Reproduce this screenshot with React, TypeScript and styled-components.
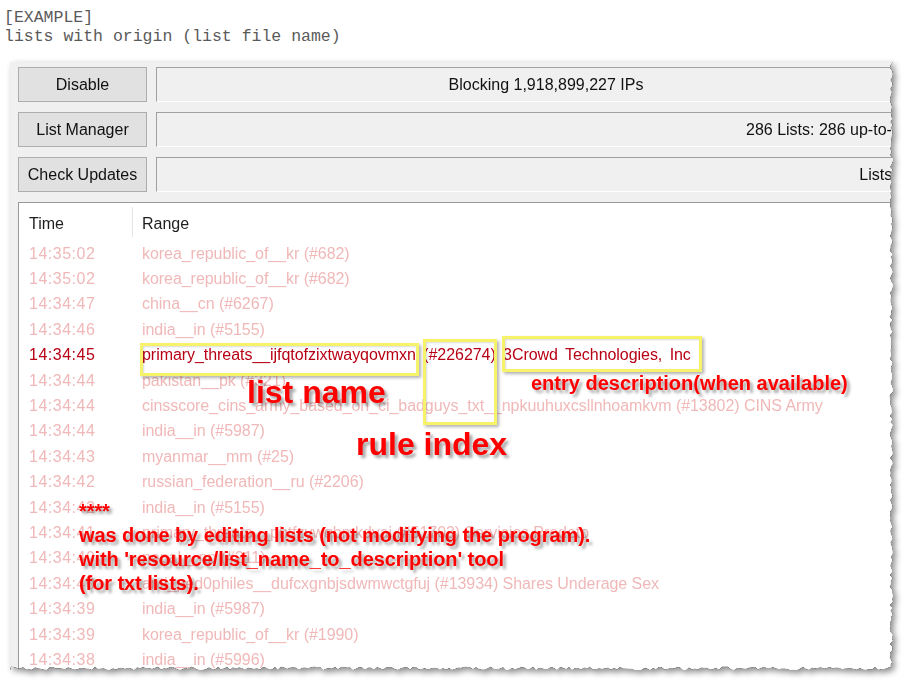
import React from 'react'
import styled, { createGlobalStyle } from 'styled-components'

const GlobalStyle = createGlobalStyle`
  body {
    margin: 0;
    background: #ffffff;
    font-family: "Liberation Sans", Arial, sans-serif;
  }
`

const Page = styled.div`
  width: 910px;
  height: 690px;
  overflow: hidden;
`

const Caption = styled.pre`
  margin: 0;
  padding: 8px 0 0 4px;
  height: 46px;
  box-sizing: border-box;
  font-family: "Liberation Mono", "Courier New", monospace;
  font-size: 16.5px;
  line-height: 19px;
  color: #5a5a5a;
`

const Paper = styled.div`
  position: relative;
  margin: 16px 0 0 10px;
  width: 883px;
  height: 608px;
  filter: drop-shadow(0 0 0.6px #2c2c2c) drop-shadow(0 0 0.4px #2c2c2c)
    drop-shadow(3px 3px 3px rgba(0, 0, 0, 0.45));
`

const Sheet = styled.div<{ $clip: string }>`
  width: 100%;
  height: 100%;
  overflow: hidden;
  background: #f0f0f0;
  clip-path: ${p => p.$clip};
`

const Window = styled.div`
  width: 940px;
  padding: 5px 0 0 8px;
  display: flex;
  flex-direction: column;
  gap: 10px;
`

const ControlRow = styled.div`
  display: grid;
  grid-template-columns: 129px 1fr;
  gap: 9px;
  height: 35px;
`

const Button = styled.div`
  box-sizing: border-box;
  display: flex;
  align-items: center;
  justify-content: center;
  padding-top: 1px;
  background: #e1e1e1;
  border: 1px solid #adadad;
  font-size: 16px;
  color: #111111;
`

const StatusField = styled.div<{ $align: 'center' | 'right'; $pad: number }>`
  box-sizing: border-box;
  display: flex;
  align-items: center;
  justify-content: ${p => (p.$align === 'center' ? 'center' : 'flex-end')};
  padding: 1px ${p => p.$pad}px 0 0;
  background: #f0f0f0;
  border-top: 1px solid #a0a0a0;
  border-left: 1px solid #a0a0a0;
  border-bottom: 1px solid #ffffff;
  border-right: 1px solid #ffffff;
  font-size: 16px;
  color: #111111;
  white-space: nowrap;
`

const ListView = styled.div`
  box-sizing: border-box;
  height: 520px;
  background: #ffffff;
  border: 1px solid #9a9a9a;
`

const HeaderRow = styled.div`
  display: grid;
  grid-template-columns: 114px 1fr;
  height: 38px;
  align-items: center;
  font-size: 16px;
  color: #1e1e1e;
`

const HeaderCell = styled.div<{ $first?: boolean }>`
  display: flex;
  align-items: center;
  height: 30px;
  padding: 3px 0 0 ${p => (p.$first ? '10px' : '9px')};
  box-sizing: border-box;
  border-right: ${p => (p.$first ? '1px solid #e5e5e5' : 'none')};
`

const Row = styled.div<{ $hot: boolean }>`
  display: grid;
  grid-template-columns: 114px 1fr;
  height: 25.4px;
  align-items: center;
  font-size: 16px;
  white-space: nowrap;
  word-spacing: ${p => (p.$hot ? '3px' : '0')};
  color: ${p => (p.$hot ? '#b80014' : '#f0b8b8')};
`

const TimeCell = styled.div`
  padding-left: 10px;
  letter-spacing: 0.5px;
`

const RangeCell = styled.div`
  padding-left: 9px;
  letter-spacing: -0.05px;
`

const Overlay = styled.div`
  position: absolute;
  inset: 0;
  pointer-events: none;
`

const Marker = styled.div`
  position: absolute;
  box-sizing: border-box;
  border: 3px solid #f6f36a;
  box-shadow: 2px 2px 3px rgba(0, 0, 0, 0.3), inset 1px 1px 2px rgba(0, 0, 0, 0.15);
`

const Label = styled.div<{ $size: number }>`
  position: absolute;
  font-family: "Liberation Sans", Arial, sans-serif;
  font-weight: bold;
  font-size: ${p => p.$size}px;
  line-height: 1;
  color: #ff0000;
  white-space: nowrap;
  text-shadow: 3px 3px 3px rgba(0, 0, 0, 0.35);
`

const Note = styled.div`
  position: absolute;
  left: 69px;
  top: 437px;
  font-family: "Liberation Sans", Arial, sans-serif;
  font-weight: bold;
  font-size: 20px;
  line-height: 24px;
  letter-spacing: -0.08px;
  color: #ff0000;
  white-space: nowrap;
  text-shadow: 3px 3px 3px rgba(0, 0, 0, 0.35);
`

const controls = [
  { label: 'Disable', status: 'Blocking 1,918,899,227 IPs', align: 'center' as const, pad: 22 },
  { label: 'List Manager', status: '286 Lists: 286 up-to-date', align: 'right' as const, pad: 34 },
  { label: 'Check Updates', status: 'Lists: 2h ago', align: 'right' as const, pad: 7 },
]

const rows = [
  ['14:35:02', 'korea_republic_of__kr (#682)'],
  ['14:35:02', 'korea_republic_of__kr (#682)'],
  ['14:34:47', 'china__cn (#6267)'],
  ['14:34:46', 'india__in (#5155)'],
  ['14:34:45', 'primary_threats__ijfqtofzixtwayqovmxn (#226274) 3Crowd Technologies, Inc'],
  ['14:34:44', 'pakistan__pk (#321)'],
  ['14:34:44', 'cinsscore_cins_army_based_on_ci_badguys_txt__npkuuhuxcsllnhoamkvm (#13802) CINS Army'],
  ['14:34:44', 'india__in (#5987)'],
  ['14:34:43', 'myanmar__mm (#25)'],
  ['14:34:42', 'russian_federation__ru (#2206)'],
  ['14:34:42', 'india__in (#5155)'],
  ['14:34:41', 'primary_threats__phtfzywqbmkdvaj (#51703) Servicios Prodeto'],
  ['14:34:40', 'nepal__np (#211)'],
  ['14:34:40', 'anti_ped0philes__dufcxgnbjsdwmwctgfuj (#13934) Shares Underage Sex'],
  ['14:34:39', 'india__in (#5987)'],
  ['14:34:39', 'korea_republic_of__kr (#1990)'],
  ['14:34:38', 'india__in (#5996)'],
]

// jagged right and bottom edge, like a torn-off screenshot
const tornEdge = (w: number, h: number) => {
  let seed = 11
  const rnd = () => {
    seed = (seed * 9301 + 49297) % 233280
    return seed / 233280
  }
  const pts = ['0px 0px', `${w}px 0px`]
  for (let y = 3; y < h - 3; y += 3) pts.push(`${(w - rnd() * 3.5).toFixed(1)}px ${y}px`)
  pts.push(`${w - 2}px ${h - 2}px`)
  for (let x = w - 3; x > 0; x -= 3) pts.push(`${x}px ${(h - rnd() * 3.5).toFixed(1)}px`)
  pts.push(`0px ${h}px`)
  return `polygon(${pts.join(', ')})`
}

export default function App() {
  const clip = tornEdge(883, 608)

  return (
    <Page>
      <GlobalStyle />
      <Caption>{'[EXAMPLE]\nlists with origin (list file name)'}</Caption>
      <Paper>
        <Sheet $clip={clip}>
          <Window>
            {controls.map(c => (
              <ControlRow key={c.label}>
                <Button>{c.label}</Button>
                <StatusField $align={c.align} $pad={c.pad}>{c.status}</StatusField>
              </ControlRow>
            ))}
            <ListView>
              <HeaderRow>
                <HeaderCell $first>Time</HeaderCell>
                <HeaderCell>Range</HeaderCell>
              </HeaderRow>
              {rows.map(([time, range], i) => (
                <Row key={i} $hot={i === 4}>
                  <TimeCell>{time}</TimeCell>
                  <RangeCell>{range}</RangeCell>
                </Row>
              ))}
            </ListView>
          </Window>
        </Sheet>
        <Overlay>
          <Marker style={{ left: 130, top: 281, width: 279, height: 33 }} />
          <Marker style={{ left: 413, top: 277, width: 74, height: 86 }} />
          <Marker style={{ left: 492, top: 274, width: 200, height: 36 }} />
          <Label $size={32} style={{ left: 237, top: 314 }}>list name</Label>
          <Label $size={32} style={{ left: 346, top: 366 }}>rule index</Label>
          <Label $size={20} style={{ left: 521, top: 311 }}>entry description(when available)</Label>
          <Note>
            ****
            <br />
            was done by editing lists (not modifying the program).
            <br />
            with 'resource/list_name_to_description' tool
            <br />
            (for txt lists).
          </Note>
        </Overlay>
      </Paper>
    </Page>
  )
}
